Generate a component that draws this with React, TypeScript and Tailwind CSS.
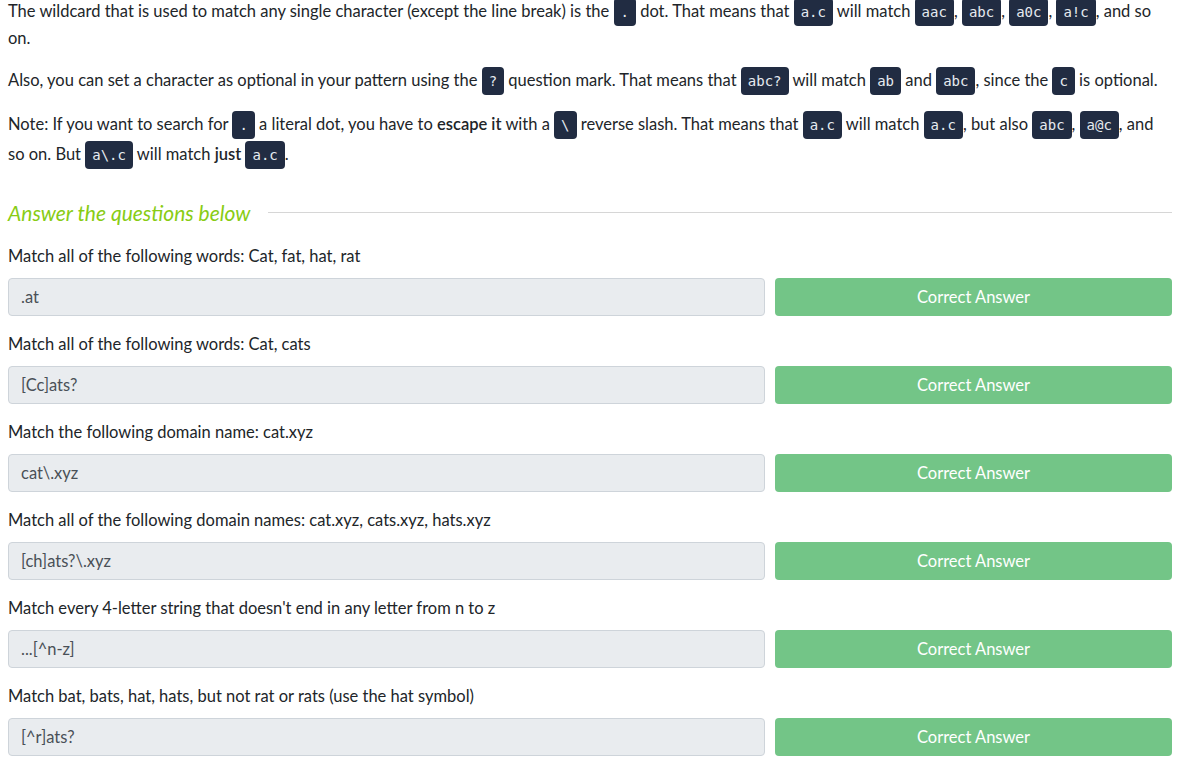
import React from "react";

const C = ({ children }: { children: React.ReactNode }) => (
  <code className="rounded-[4px] bg-[#212c42] px-[7px] py-[6px] text-[14px] text-[#e6eaf0] [font-family:'DejaVu_Sans_Mono',monospace]">
    {children}
  </code>
);

const questions = [
  { q: "Match all of the following words: Cat, fat, hat, rat", a: ".at" },
  { q: "Match all of the following words: Cat, cats", a: "[Cc]ats?" },
  { q: "Match the following domain name: cat.xyz", a: "cat\\.xyz" },
  { q: "Match all of the following domain names: cat.xyz, cats.xyz, hats.xyz", a: "[ch]ats?\\.xyz" },
  { q: "Match every 4-letter string that doesn't end in any letter from n to z", a: "...[^n-z]" },
  { q: "Match bat, bats, hat, hats, but not rat or rats (use the hat symbol)", a: "[^r]ats?" },
];

export default function App() {
  return (
    <div className="h-[764px] overflow-hidden bg-white pl-2 pr-[9px] text-[16.5px] text-[#212529] [font-family:Lato,'Liberation_Sans',sans-serif]">
      <p className="-mt-[2px] leading-[26px]">
        The wildcard that is used to match any single character (except the line break) is the <C>.</C> dot. That means that <C>a.c</C> will match <C>aac</C>, <C>abc</C>, <C>a0c</C>, <C>a!c</C>, and so on.
      </p>
      <p className="mt-4 leading-[26px]">
        Also, you can set a character as optional in your pattern using the <C>?</C> question mark. That means that <C>abc?</C> will match <C>ab</C> and <C>abc</C>, since the <C>c</C> is optional.
      </p>
      <p className="mt-[16px] leading-[29px]">
        Note: If you want to search for <C>.</C> a literal dot, you have to <b className="font-semibold">escape it</b> with a <C>\</C> reverse slash. That means that <C>a.c</C> will match <C>a.c</C>, but also <C>abc</C>, <C>a@c</C>, and so on. But <C>a\.c</C> will match <b className="font-semibold">just</b> <C>a.c</C>.
      </p>
      <div className="mt-[29px] flex items-center gap-[18px]">
        <h3 className="text-[21px] italic leading-[27px] text-[#88cc14]">Answer the questions below</h3>
        <div className="h-px flex-1 bg-[#d6d6d6]" />
      </div>
      <div className="mt-[18px] flex flex-col gap-[16px]">
        {questions.map((item, i) => (
          <div key={i}>
            <div className="leading-[24px]">{item.q}</div>
            <div className="mt-[10px] flex gap-[10px]">
              <div className="flex h-[38px] flex-1 items-center rounded-[4px] border border-[#ced4da] bg-[#e9ecef] px-3 text-[#495057]">
                {item.a}
              </div>
              <div className="flex h-[38px] w-[397px] items-center justify-center rounded-[4px] bg-[#73c587] text-white">
                Correct Answer
              </div>
            </div>
          </div>
        ))}
      </div>
    </div>
  );
}
